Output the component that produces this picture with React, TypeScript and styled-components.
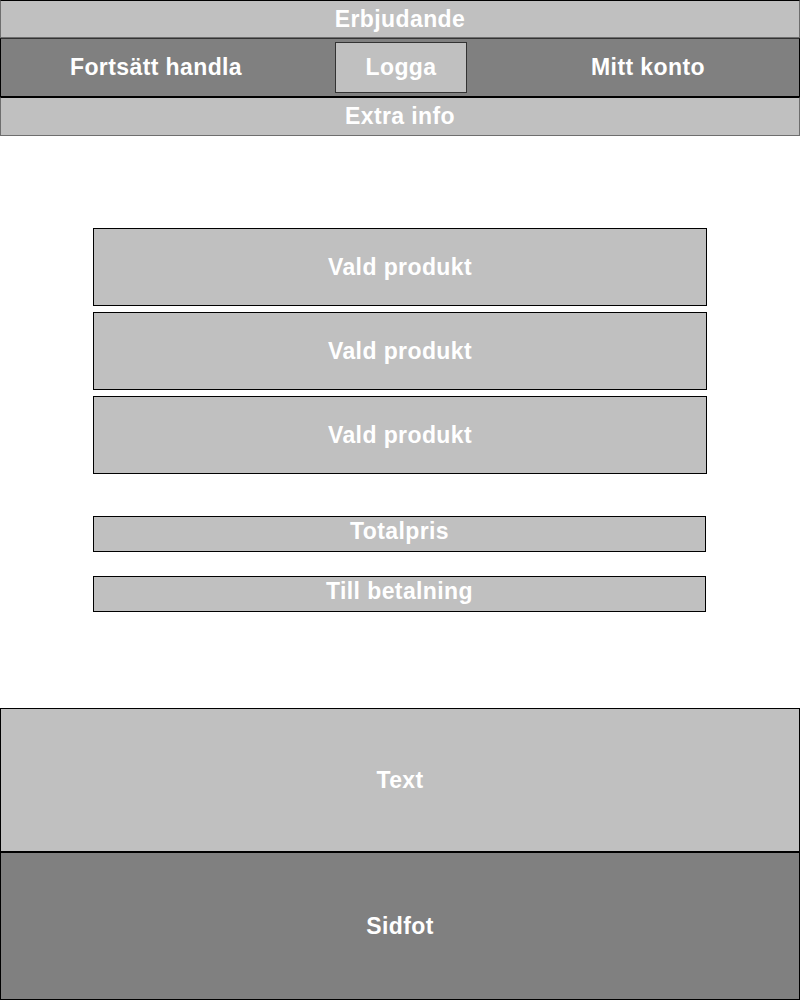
import React from "react";
import styled, { createGlobalStyle } from "styled-components";

const GlobalStyle = createGlobalStyle`
  html, body {
    margin: 0;
    padding: 0;
    background: #ffffff;
  }
  body {
    font-family: "Liberation Sans", Arial, Helvetica, sans-serif;
  }
  * {
    box-sizing: border-box;
  }
`;

const Page = styled.div`
  width: 800px;
  display: flex;
  flex-direction: column;
`;

const Label = styled.span`
  color: #ffffff;
  font-weight: 700;
  font-size: 23px;
  letter-spacing: 0.4px;
  line-height: 1;
`;

const Strip = styled.div<{ $height: number }>`
  height: ${(p) => p.$height}px;
  background: #c0c0c0;
  border: 1px solid #6e6e6e;
  border-top-color: #000;
  display: flex;
  align-items: center;
  justify-content: center;
`;

const NavBar = styled.div`
  height: 59px;
  background: #808080;
  border: 1px solid #000;
  border-top-color: #333;
  display: grid;
  grid-template-columns: 310px 1fr 302px;
  align-items: center;
`;

const NavItem = styled.div<{ $start?: boolean }>`
  display: flex;
  justify-content: ${(p) => (p.$start ? "flex-start" : "center")};
  align-items: center;
`;

const LogoBox = styled.div`
  width: 132px;
  height: 51px;
  background: #c0c0c0;
  border: 1px solid #333;
  display: flex;
  align-items: center;
  justify-content: center;
  margin-left: 24px;
`;

const Main = styled.main`
  width: 614px;
  margin: 0 auto;
  padding-top: 92px;
  padding-bottom: 96px;
  display: flex;
  flex-direction: column;
`;

const ProductList = styled.div`
  display: flex;
  flex-direction: column;
  gap: 6px;
`;

const ProductBox = styled.div`
  height: 78px;
  background: #c0c0c0;
  border: 1px solid #000;
  display: flex;
  align-items: center;
  justify-content: center;
`;

const Summary = styled.div`
  margin-top: 42px;
  display: flex;
  flex-direction: column;
  gap: 24px;
`;

const SummaryBar = styled.div`
  height: 36px;
  width: 613px;
  background: #c0c0c0;
  border: 1px solid #000;
  display: flex;
  align-items: center;
  justify-content: center;
  padding-bottom: 6px;
`;

const InfoSection = styled.section`
  height: 143px;
  background: #c0c0c0;
  border: 1px solid #000;
  border-bottom: none;
  display: flex;
  align-items: center;
  justify-content: center;
`;

const Footer = styled.footer`
  height: 149px;
  background: #808080;
  border: 1px solid #000;
  border-top-width: 2px;
  display: flex;
  align-items: center;
  justify-content: center;
`;

const products = ["Vald produkt", "Vald produkt", "Vald produkt"];

export default function App() {
  return (
    <>
      <GlobalStyle />
      <Page>
        <Strip $height={38}>
          <Label>Erbjudande</Label>
        </Strip>
        <NavBar>
          <NavItem>
            <Label>Fortsätt handla</Label>
          </NavItem>
          <NavItem $start>
            <LogoBox>
              <Label>Logga</Label>
            </LogoBox>
          </NavItem>
          <NavItem>
            <Label>Mitt konto</Label>
          </NavItem>
        </NavBar>
        <Strip $height={39}>
          <Label>Extra info</Label>
        </Strip>
        <Main>
          <ProductList>
            {products.map((name, i) => (
              <ProductBox key={i}>
                <Label>{name}</Label>
              </ProductBox>
            ))}
          </ProductList>
          <Summary>
            <SummaryBar>
              <Label>Totalpris</Label>
            </SummaryBar>
            <SummaryBar>
              <Label>Till betalning</Label>
            </SummaryBar>
          </Summary>
        </Main>
        <InfoSection>
          <Label>Text</Label>
        </InfoSection>
        <Footer>
          <Label>Sidfot</Label>
        </Footer>
      </Page>
    </>
  );
}
